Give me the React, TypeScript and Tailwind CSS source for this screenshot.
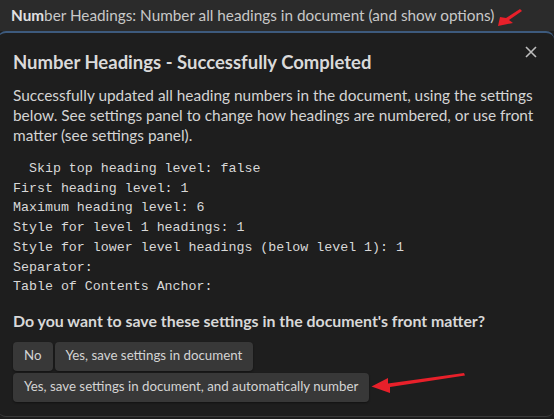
export default function App() {
  const settings = [
    '  Skip top heading level: false',
    'First heading level: 1',
    'Maximum heading level: 6',
    'Style for level 1 headings: 1',
    'Style for lower level headings (below level 1): 1',
    'Separator: ',
    'Table of Contents Anchor: ',
  ];

  const btn = 'h-[29px] px-[11px] rounded-[4px] bg-[#383838] text-[13.3px] text-[#d4d4d4] shadow-[0_1px_2px_rgba(0,0,0,0.4)]';

  return (
    <div className="relative w-[554px] h-[419px] overflow-hidden bg-[#1e1e1e] text-[#dadada] font-['Lato',sans-serif]">
      {/* Command palette bar */}
      <div className="h-[31px] bg-[#2b2b2b] flex items-center pl-[11px] text-[15.3px] text-[#c8c8c8]">
        <span className="font-bold text-[#e0e0e0]">Num</span>
        <span>ber Headings: Number all headings in document (and show options)</span>
      </div>
      <svg className="absolute left-[494px] top-[6px]" width="30" height="24" viewBox="0 0 30 24">
        <path d="M26 3 L28 5 L15 14 L19 17 L4 20 L6 11 L12 12 Z" fill="#e8202a" />
      </svg>

      {/* Modal */}
      <div className="relative -ml-[2px] w-[556px] h-[386px] rounded-[8px] border-t-2 border-b border-[#3d5a7d] border-b-[#3a3a3a] bg-[#1e1e1e] px-[15px] pt-[16px]">
        <button className="absolute right-[16px] top-[12px] text-[#bdbdbd]">
          <svg width="14" height="14" viewBox="0 0 14 14">
            <path d="M2 2 L12 12 M12 2 L2 12" stroke="currentColor" strokeWidth="1.6" />
          </svg>
        </button>
        <h2 className="text-[18.5px] font-bold text-[#dadada] leading-[26px]">Number Headings - Successfully Completed</h2>
        <p className="mt-[10px] text-[15.4px] leading-[20px] text-[#d4d4d4]">
          Successfully updated all heading numbers in the document, using the settings below. See settings panel to change how headings are numbered, or use front matter (see settings panel).
        </p>
        <pre className="mt-[14px] font-['Liberation_Mono',monospace] text-[13.3px] leading-[19.7px] text-[#d8d8d8] whitespace-pre">
          {settings.join('\n')}
        </pre>
        <p className="mt-[14px] text-[15.9px] font-bold leading-[20px] text-[#d8d8d8]">
          Do you want to save these settings in the document's front matter?
        </p>
        <div className="mt-[11px] flex flex-col items-start gap-[2px]">
          <div className="flex gap-[2px]">
            <button className={btn}>No</button>
            <button className={btn}>Yes, save settings in document</button>
          </div>
          <button className={btn}>Yes, save settings in document, and automatically number</button>
        </div>
      </div>
      <svg className="absolute left-[368px] top-[370px]" width="100" height="26" viewBox="0 0 100 26">
        <path d="M96 3 L97 5.5 L22 17 L22 23 L3.5 16.5 L20 8 L20 13.5 Z" fill="#e8202a" />
      </svg>
    </div>
  );
}
